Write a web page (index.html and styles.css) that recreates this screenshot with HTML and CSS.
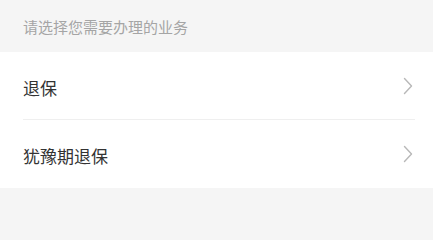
FILE: index.html
```html
<!DOCTYPE html>
<html lang="zh-CN">
<head>
<meta charset="utf-8">
<link rel="stylesheet" href="styles.css">
</head>
<body>
<div class="page">
  <div class="section-title">请选择您需要办理的业务</div>
  <ul class="list">
    <li class="item">
      <div class="item-inner">
        <span class="item-label">退保</span>
        <svg class="chevron" width="10" height="18" viewBox="0 0 10 18"><path d="M1.5 1.5 L8.5 9 L1.5 16.5" fill="none" stroke="#b8b8b8" stroke-width="1.4" stroke-linecap="round" stroke-linejoin="round"/></svg>
      </div>
    </li>
    <li class="item">
      <div class="item-inner last">
        <span class="item-label">犹豫期退保</span>
        <svg class="chevron" width="10" height="18" viewBox="0 0 10 18"><path d="M1.5 1.5 L8.5 9 L1.5 16.5" fill="none" stroke="#b8b8b8" stroke-width="1.4" stroke-linecap="round" stroke-linejoin="round"/></svg>
      </div>
    </li>
  </ul>
</div>
</body>
</html>
```
FILE: styles.css
```css
html, body {
  margin: 0;
  padding: 0;
  background: #f5f5f5;
}
.page {
  width: 433px;
  height: 207px;
  font-family: "Noto Sans CJK SC", "Noto Sans", sans-serif;
  background: #f5f5f5;
}
.section-title {
  height: 52px;
  display: flex;
  align-items: center;
  padding-left: 23px;
  font-size: 15px;
  color: #a5a5a5;
}
.list {
  list-style: none;
  margin: 0;
  padding: 0;
  background: #fff;
}
.item {
  padding-left: 23px;
}
.item-inner {
  height: 67px;
  display: flex;
  align-items: center;
  justify-content: space-between;
  margin-right: 18px;
  border-bottom: 1px solid #efefef;
}
.item-inner.last {
  border-bottom: none;
  height: 68px;
}
.item-label {
  font-size: 17px;
  color: #333;
  padding-top: 3px;
}
.chevron {
  display: block;
  margin-right: 2px;
}
```
